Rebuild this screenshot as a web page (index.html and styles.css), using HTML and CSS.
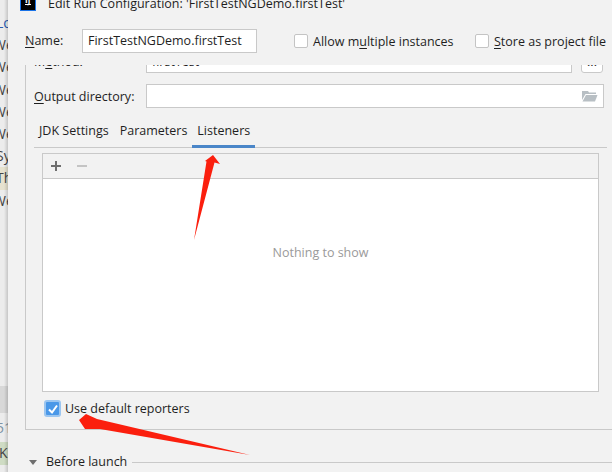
FILE: index.html
```html
<!DOCTYPE html>
<html lang="en">
<head>
  <meta charset="UTF-8" />
  <title>Edit Run Configuration</title>
  <link rel="stylesheet" href="styles.css">
</head>
<body>
  <div class="editor-strip">
    <div class="strip-line near blue">Lo</div>
    <div class="strip-line">We</div>
    <div class="strip-line">We</div>
    <div class="strip-line">We</div>
    <div class="strip-line">We</div>
    <div class="strip-line">We</div>
    <div class="strip-line near">Sy</div>
    <div class="strip-line near beige">Th</div>
    <div class="strip-line">We</div>
    <div class="strip-gap"></div>
    <div class="strip-band"></div>
    <div class="strip-line near gutter">51</div>
    <div class="strip-line start green">K</div>
  </div>

  <div class="dialog">
    <div class="titlebar">
      <div class="app-icon"><span class="app-icon-text">IJ</span><span class="app-icon-bar"></span></div>
      <div class="title">Edit Run Configuration: 'FirstTestNGDemo.firstTest'</div>
    </div>

    <div class="name-row">
      <label class="name-label"><u>N</u>ame:</label>
      <div class="field name-field">FirstTestNGDemo.firstTest</div>
      <label class="check allow"><span class="box"></span><span>Allow m<u>u</u>ltiple instances</span></label>
      <label class="check store"><span class="box"></span><span><u>S</u>tore as project file</span></label>
    </div>

    <div class="scroller">
      <div class="group">
        <div class="form-row method-row">
          <label class="form-label">M<u>e</u>thod:</label>
          <div class="field method-field">firstTest</div>
          <div class="more-btn">...</div>
        </div>
        <div class="form-row output-row">
          <label class="form-label"><u>O</u>utput directory:</label>
          <div class="field output-field">
            <svg class="folder" width="16" height="12" viewBox="0 0 16 12">
              <path d="M0 1h6l1 1.500h7v1.500H3.500L0 10z" fill="#b8bfc4"/>
              <path d="M4 5h11.500L13 11.500H0.500z" fill="#b8bfc4"/>
            </svg>
          </div>
        </div>

        <div class="tabs">
          <div class="tab">JDK Settings</div>
          <div class="tab">Parameters</div>
          <div class="tab active">Listeners</div>
        </div>

        <div class="panel">
          <div class="toolbar">
            <svg class="tool" width="12" height="12" viewBox="0 0 12 12"><path d="M1 6h10M6 1v10" stroke="#6e6e6e" stroke-width="2"/></svg>
            <svg class="tool" width="12" height="12" viewBox="0 0 12 12"><path d="M1 6h10" stroke="#c4c4c4" stroke-width="2"/></svg>
          </div>
          <div class="list-empty">Nothing to show</div>
        </div>

        <label class="check reporters">
          <span class="box checked">
            <svg width="12" height="12" viewBox="0 0 12 12"><path d="M2 6.500l3 3 5-7" fill="none" stroke="#fff" stroke-width="2"/></svg>
          </span>
          <span>Use default reporters</span>
        </label>
      </div>

      <div class="before-launch">
        <span class="triangle"></span>
        <span class="before-text">Before launch</span>
        <span class="before-line"></span>
      </div>
    </div>
  </div>

  <!-- red arrows painted on top of the screenshot -->
  <svg class="arrows" width="612" height="472" viewBox="0 0 612 472">
    <path d="M213 155L220 164L214.500 162.500L194 240L206.500 161.500L205 161Z" fill="#fb1f0e"/>
    <path d="M79 420L86 414L97 419L250 455L100 429L85 429Z" fill="#fb1f0e"/>
  </svg>
</body>
</html>
```

FILE: styles.css
```css
* {
  box-sizing: border-box;
}
html, body {
  height: 100%;
}
body {
  margin: 0;
  display: flex;
  overflow: hidden;
  font-family: "Open Sans", "Noto Sans", sans-serif;
  font-size: 12.500px;
  color: #1f1f1f;
  background-color: #f2f2f2;
}
u {
  text-underline-offset: 2px;
}

/* editor behind the dialog */
.editor-strip {
  width: 8px;
  flex: none;
  position: relative;
  overflow: hidden;
  padding-top: 12px;
  background-color: #ececec;
  font-size: 14px;
  color: #444;
}
.editor-strip::after {
  content: "";
  position: absolute;
  top: 0;
  right: 0;
  bottom: 0;
  width: 4px;
  background: linear-gradient(to right, rgba(0, 0, 0, 0), rgba(0, 0, 0, 0.16));
}
.strip-line {
  height: 22.200px;
  line-height: 22px;
  white-space: nowrap;
  text-indent: -7px;
}
.strip-line.near {
  text-indent: -4px;
}
.strip-line.start {
  text-indent: -1px;
}
.strip-line.blue {
  color: #2a5bb0;
}
.strip-line.beige {
  background-color: #e6e2cf;
}
.strip-line.gutter {
  height: 29px;
  line-height: 29px;
  color: #7d93a5;
}
.strip-line.green {
  height: 23px;
  background-color: #cfdcc4;
}
.strip-gap {
  height: 174px;
}
.strip-band {
  height: 27px;
  background-color: #d8d8d8;
}

.dialog {
  flex: 1;
  min-width: 0;
  display: flex;
  flex-direction: column;
  overflow: hidden;
}

.titlebar {
  height: 11px;
  display: flex;
  align-items: flex-end;
  padding-left: 12px;
  flex: none;
}
.app-icon {
  width: 16px;
  height: 16px;
  flex: none;
  background-color: #000;
  border: 1px solid #1a73e8;
  color: #fff;
  position: relative;
  overflow: hidden;
}
.app-icon-text {
  position: absolute;
  left: 4px;
  top: -1px;
  font-size: 8px;
  line-height: 10px;
  font-weight: bold;
}
.app-icon-bar {
  position: absolute;
  left: 4px;
  bottom: 5px;
  width: 6px;
  height: 1px;
  background-color: #fff;
}
.title {
  margin-left: 12px;
  line-height: 14px;
  white-space: nowrap;
}

.name-row {
  height: 54px;
  flex: none;
  display: flex;
  align-items: flex-start;
  padding: 18px 0 0 17px;
}
.name-label {
  width: 57px;
  flex: none;
  line-height: 24px;
}
.field {
  height: 24px;
  flex: none;
  line-height: 22px;
  padding: 0 5px;
  border: 1px solid #c9c9c9;
  background-color: #fff;
  white-space: nowrap;
}
.name-field {
  width: 175px;
}
.check {
  display: flex;
  align-items: center;
  flex: none;
  white-space: nowrap;
}
.box {
  width: 14px;
  height: 14px;
  flex: none;
  border: 1px solid #c4c4c4;
  border-radius: 2px;
  background-color: #fff;
  margin-right: 5px;
}
.allow, .store {
  height: 24px;
}
.allow {
  width: 181px;
  margin-left: 37px;
}

.scroller {
  height: 401px;
  flex: none;
  overflow: hidden;
}
.group {
  margin-left: 17px;
  height: 365px;
  border-left: 1px solid #c9c9c9;
  border-bottom: 1px solid #c9c9c9;
  overflow: hidden;
  padding-left: 8px;
}
.form-row {
  height: 24px;
  display: flex;
  align-items: flex-start;
}
.method-row {
  margin-top: -16px;
}
.output-row {
  margin-top: 11px;
}
.form-label {
  width: 112px;
  flex: none;
  line-height: 25px;
}
.method-field {
  width: 426px;
  line-height: 23px;
}
.more-btn {
  width: 22px;
  height: 24px;
  flex: none;
  margin-left: 9px;
  border: 1px solid #c9c9c9;
  border-radius: 3px;
  background-color: #fff;
  text-align: center;
  line-height: 24px;
}
.output-field {
  width: 458px;
  display: flex;
  align-items: center;
  justify-content: flex-end;
  padding-right: 5px;
}

.tabs {
  display: flex;
  margin-top: 11px;
  width: 573px;
  height: 29px;
  border-bottom: 1px solid #c9c9c9;
}
.tab {
  height: 29px;
  padding: 0 5px;
  line-height: 23px;
  white-space: nowrap;
}
.tab:first-child {
  margin-right: 1px;
}
.tab.active {
  border-bottom: 3px solid #4a86c8;
}

.panel {
  width: 557px;
  height: 239px;
  margin: 5px 0 0 8px;
  border: 1px solid #c9c9c9;
  display: flex;
  flex-direction: column;
}
.toolbar {
  height: 25px;
  flex: none;
  display: flex;
  align-items: center;
  gap: 14px;
  padding-left: 7px;
  border-bottom: 1px solid #c9c9c9;
}
.list-empty {
  flex: 1;
  background-color: #fff;
  color: #9a9a9a;
  display: flex;
  align-items: center;
  justify-content: center;
  padding-bottom: 65px;
}

.reporters {
  margin: 8px 0 0 10px;
}
.box.checked {
  width: 17px;
  height: 17px;
  border: 2px solid #9cc6f0;
  border-radius: 3px;
  background-color: #4a98e8;
  display: flex;
  align-items: center;
  justify-content: center;
  margin-right: 4px;
}

.before-launch {
  display: flex;
  align-items: center;
  margin-top: 23px;
  padding-left: 21px;
  line-height: 18px;
}
.triangle {
  width: 0;
  height: 0;
  border-left: 4.500px solid transparent;
  border-right: 4.500px solid transparent;
  border-top: 5px solid #6e6e6e;
  margin-right: 9px;
}
.before-line {
  flex: 1;
  height: 1px;
  margin-left: 5px;
  background-color: #c9c9c9;
}

.arrows {
  position: absolute;
  left: 0;
  top: 0;
  pointer-events: none;
}
```
